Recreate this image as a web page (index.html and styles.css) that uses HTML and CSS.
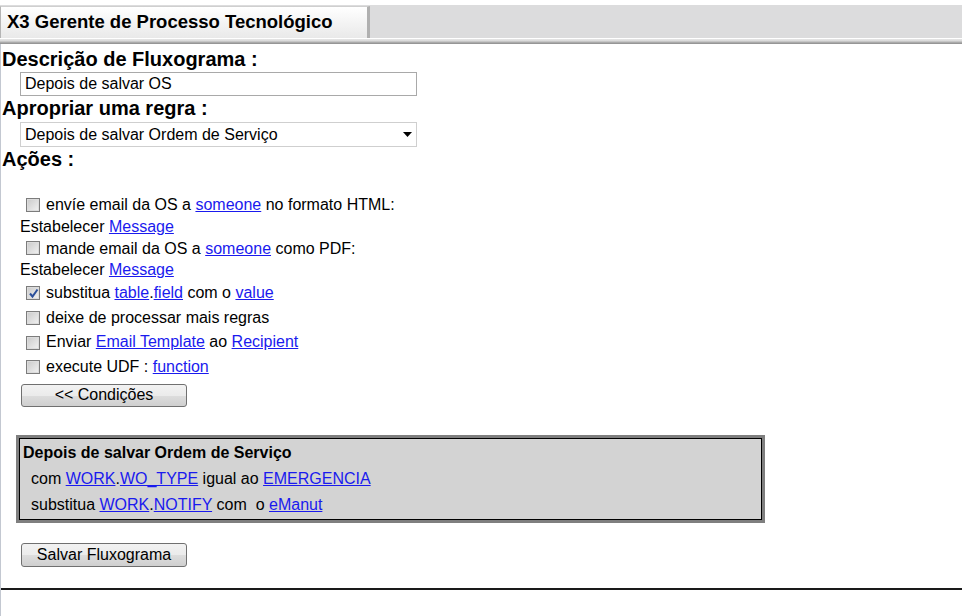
FILE: index.html
```html
<!DOCTYPE html>
<html>
<head>
<title>X3 Gerente de Processo Tecnológico</title>
<link rel="stylesheet" href="styles.css">
</head>
<body>
<div id="tabbar">
    <div class="tab">X3 Gerente de Processo Tecnológico</div>
</div>
<div id="rule"></div>
<div id="page">
    <div class="label">Descrição de Fluxograma :</div>
    <input class="text" type="text" value="Depois de salvar OS">
    <div class="label">Apropriar uma regra :</div>
    <div class="select">Depois de salvar Ordem de Serviço
        <svg class="arrow" width="9" height="5" viewBox="0 0 9 5"><path d="M0 0h9L4.5 5z" fill="#000"/></svg>
    </div>
    <div class="label">Ações :</div>
    <div id="actions">
        <div class="row short"><span class="cb"></span><span>envíe email da OS a <a href="#">someone</a> no formato HTML:</span></div>
        <div class="line short">Estabelecer <a href="#">Message</a></div>
        <div class="row short"><span class="cb"></span><span>mande email da OS a <a href="#">someone</a> como PDF:</span></div>
        <div class="line short">Estabelecer <a href="#">Message</a></div>
        <div class="row tall"><span class="cb checked"><svg width="11" height="11" viewBox="0 0 11 11"><path d="M2 5.5l2.5 3L9.5 1.5" fill="none" stroke="#2b4f9a" stroke-width="2"/></svg></span><span>substitua <a href="#">table</a>.<a href="#">field</a> com o <a href="#">value</a></span></div>
        <div class="row tall"><span class="cb"></span><span>deixe de processar mais regras</span></div>
        <div class="row tall"><span class="cb"></span><span>Enviar <a href="#">Email Template</a> ao <a href="#">Recipient</a></span></div>
        <div class="row tall"><span class="cb"></span><span>execute UDF : <a href="#">function</a></span></div>
    </div>
    <button class="btn cond">&lt;&lt; Condições</button>
    <div id="summary">
        <div class="title">Depois de salvar Ordem de Serviço</div>
        <div class="cond-line">com <a href="#">WORK</a>.<a href="#">WO_TYPE</a> igual ao <a href="#">EMERGENCIA</a></div>
        <div class="cond-line">substitua <a href="#">WORK</a>.<a href="#">NOTIFY</a> com &nbsp;o <a href="#">eManut</a></div>
    </div>
    <button class="btn save">Salvar Fluxograma</button>
    <div class="foot"></div>
</div>
</body>
</html>
```
FILE: styles.css
```css
html, body {
    margin: 0;
    padding: 0;
    background-color: #fff;
    font-family: "Liberation Sans", Arial, sans-serif;
    color: #000;
}
#tabbar {
    margin-top: 5px;
    height: 33px;
    background-color: #dcdcdd;
    display: flex;
    align-items: flex-end;
}
#tabbar .tab {
    width: 360px;
    height: 31px;
    padding-left: 6px;
    font-size: 18.5px;
    font-weight: bold;
    line-height: 30px;
    background: linear-gradient(#ffffff, #e9e9e9);
    border-left: 1px solid #b4b4b4;
    border-top: 1px solid #cfcfcf;
    border-right: 3px solid #b0b0b0;
}
#rule {
    height: 6px;
    background: linear-gradient(#ffffff 0, #ffffff 1px, #e6e6e6 1px, #d8d8d8 3px, #b4b4b4 4px, #8c8c8c 6px);
}
#page {
    border-left: 1px solid #c3c8d1;
    min-height: 572px;
    padding-top: 4px;
    display: flex;
    flex-direction: column;
    align-items: flex-start;
}
.label {
    font-size: 20px;
    font-weight: bold;
    line-height: 23px;
    padding-left: 1px;
}
.text {
    box-sizing: border-box;
    width: 397px;
    height: 24px;
    margin: 1px 0 1px 19px;
    padding: 0 4px;
    border: 1px solid #a9a9a9;
    font-family: "Liberation Sans", Arial, sans-serif;
    font-size: 16px;
    color: #000;
}
.select {
    box-sizing: border-box;
    width: 397px;
    height: 25px;
    margin: 2px 0 1px 19px;
    padding: 0 4px;
    border: 1px solid #cfcfcf;
    font-size: 16px;
    line-height: 23px;
    display: flex;
    justify-content: space-between;
    align-items: center;
}
#actions {
    margin-top: 23px;
    padding-left: 19px;
    font-size: 16px;
}
#actions .short {
    height: 21.75px;
    line-height: 21.75px;
}
#actions .tall {
    height: 24.67px;
    line-height: 24.67px;
}
#actions .row {
    display: flex;
    align-items: center;
}
.cb {
    box-sizing: border-box;
    width: 14px;
    height: 14px;
    margin: 0 6px 0 6px;
    border: 1px solid #7c7c7c;
    background: linear-gradient(135deg, #c9c9c9, #f2f2f2);
    box-shadow: inset 0 0 0 1px #dcdcdc;
    display: flex;
    align-items: center;
    justify-content: center;
}
.cb.checked svg {
    display: block;
}
a {
    color: #1a1aee;
    text-decoration: underline;
}
.btn {
    box-sizing: border-box;
    width: 166px;
    margin-left: 20px;
    border: 1px solid #707070;
    border-radius: 3px;
    background: linear-gradient(#f2f2f2 0, #ebebeb 50%, #dddddd 51%, #cfcfcf 100%);
    font-family: "Liberation Sans", Arial, sans-serif;
    font-size: 16px;
    color: #000;
    padding: 0;
}
.btn.cond {
    height: 23px;
    margin-top: 4px;
    line-height: 20px;
}
.btn.save {
    height: 24px;
    margin-top: 20px;
    line-height: 21px;
}
#summary {
    box-sizing: border-box;
    width: 749px;
    height: 88px;
    margin: 28px 0 0 15px;
    padding: 2px 0 0 4px;
    background-color: #d3d3d3;
    border: 3px solid #7f7f7f;
    box-shadow: inset 0 0 0 1px #000;
    font-size: 16px;
}
#summary .title {
    font-weight: bold;
    line-height: 26px;
}
#summary .cond-line {
    line-height: 26px;
    padding-left: 8px;
}
.foot {
    align-self: stretch;
    height: 2px;
    margin-top: 21px;
    background-color: #1a1a1a;
}
```
